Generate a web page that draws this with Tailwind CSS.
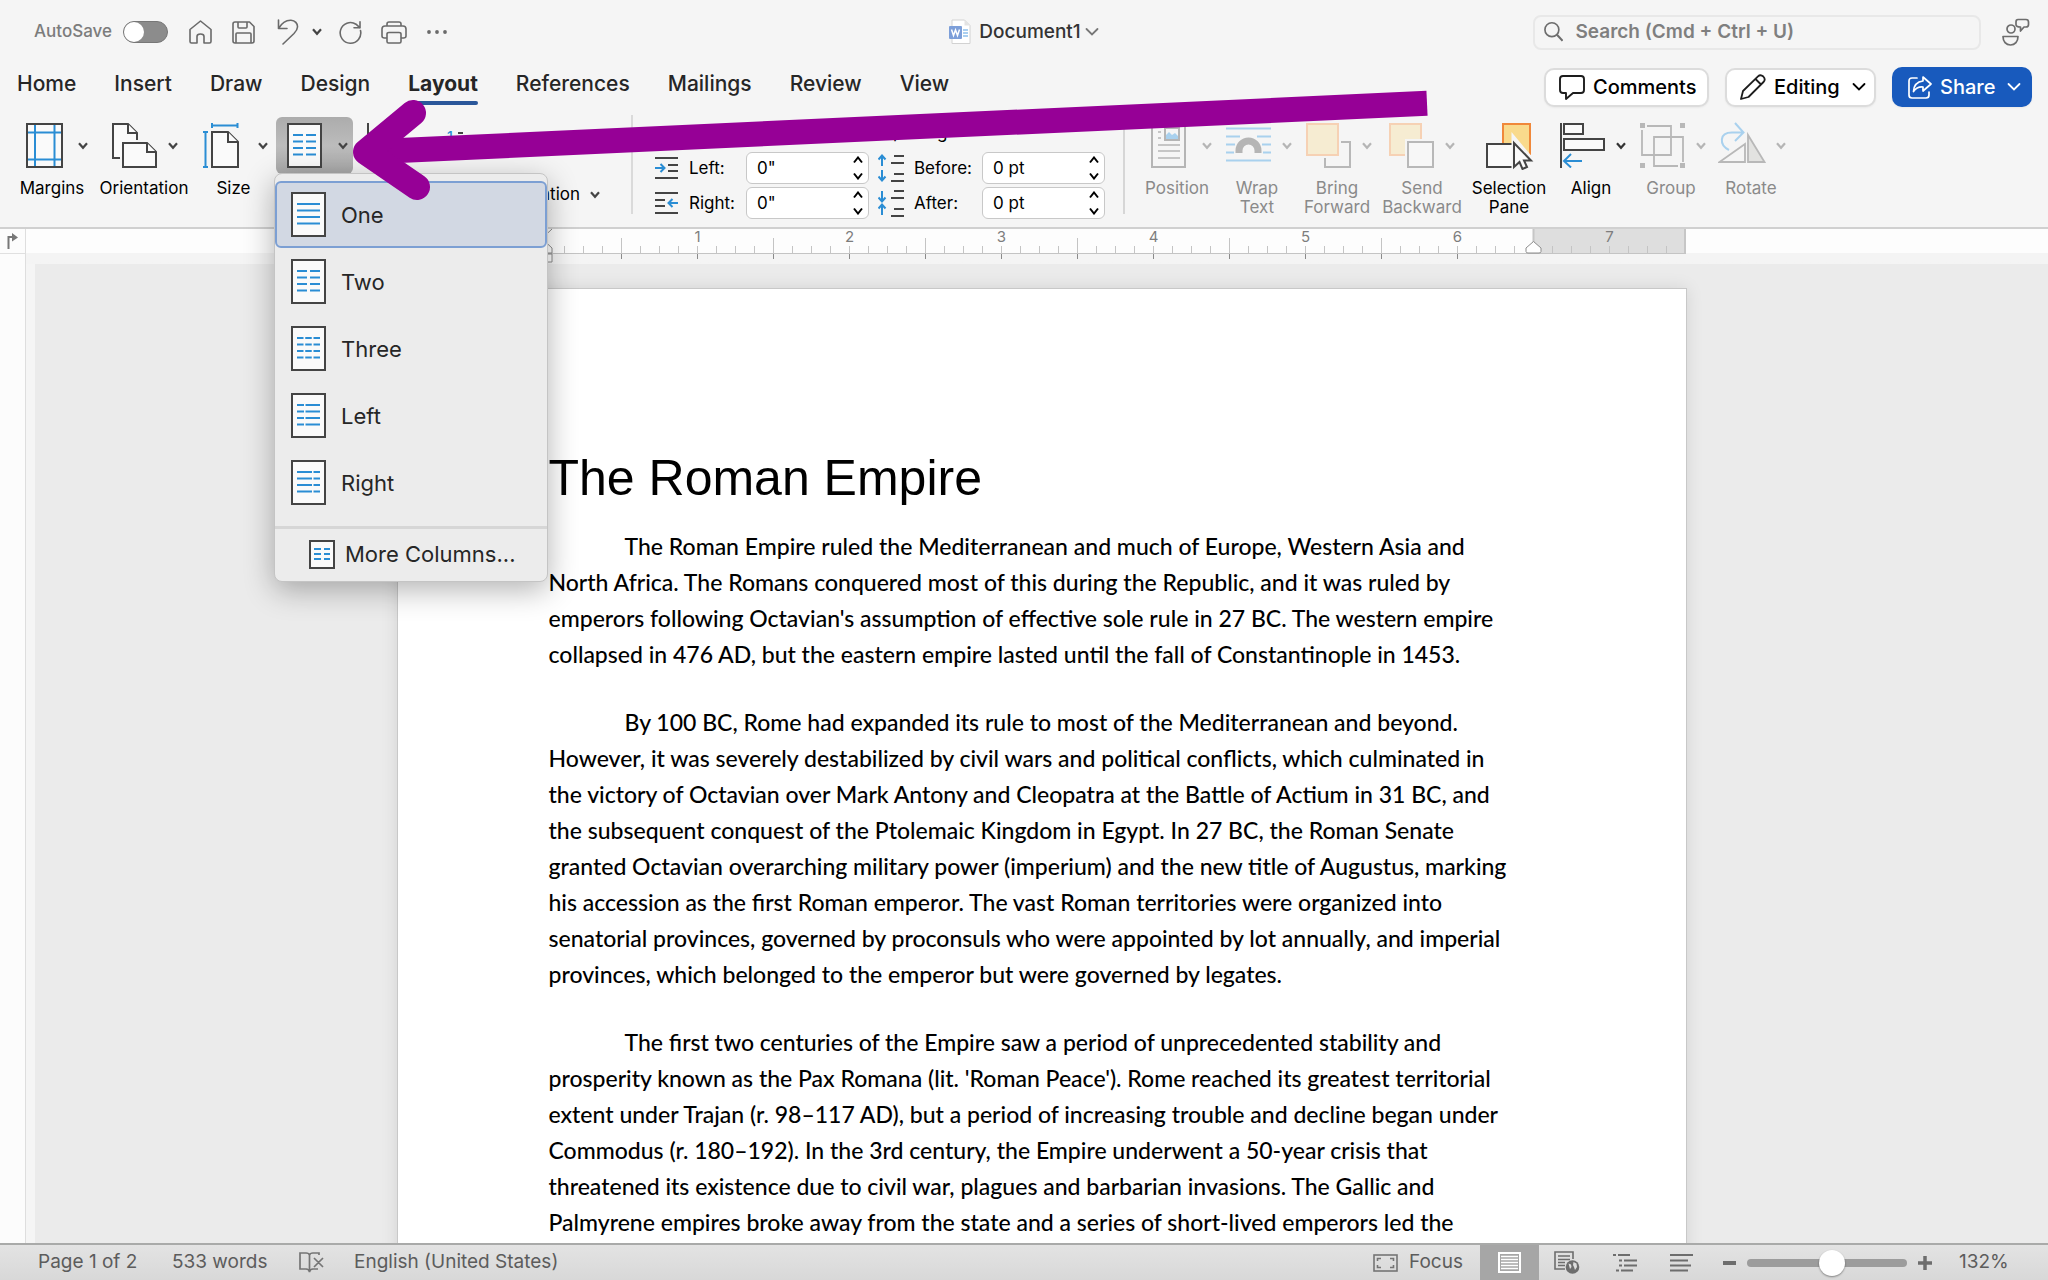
<!DOCTYPE html>
<html lang="en">
<head>
<meta charset="utf-8">
<meta name="viewport" content="width=device-width, initial-scale=1">
<title>Document1</title>
<script src="https://cdn.jsdelivr.net/npm/@tailwindcss/browser@4"></script>
</head>
<body class="relative flex h-screen flex-col overflow-hidden bg-[#f5f5f5] font-['Inter',sans-serif] text-[#262626]">

<!-- Shared symbols -->
<svg class="hidden">
  <symbol id="caret" viewBox="0 0 10 8"><path d="M1 1.2 5 5.8 9 1.2" fill="none" stroke="currentColor" stroke-width="2.2"/></symbol>
  <symbol id="chev" viewBox="0 0 14 10"><path d="M1.5 2 7 7.5 12.5 2" fill="none" stroke="currentColor" stroke-width="1.8" stroke-linecap="round"/></symbol>
  <symbol id="steps" viewBox="0 0 10 24"><path d="M1 6.500 5 1.500 9 6.500M1 17.500 5 22.500 9 17.500" fill="none" stroke="currentColor" stroke-width="2"/></symbol>
  <symbol id="sheet" viewBox="0 0 35 45"><rect x="1" y="1" width="33" height="43" fill="#fafafa" stroke="#444" stroke-width="2"/></symbol>
</svg>

<!-- Title bar -->
<header class="grid h-16 shrink-0 grid-cols-[1fr_auto_1fr] items-center">
  <div class="flex h-12 items-center pl-[34px] text-[#6a6a6a]">
    <span class="w-[89px] text-[17px] font-medium text-[#7c7c7c]">AutoSave</span>
    <button role="switch" aria-checked="false" aria-label="AutoSave" class="flex h-[22px] w-[45px] items-center rounded-full border border-[#777] bg-[#8c8c8c]"><span class="h-[20px] w-[20px] rounded-full bg-white"></span></button>
    <button aria-label="Home" class="ml-[21px]"><svg width="23" height="24" viewBox="0 0 23 24" fill="none" stroke="currentColor" stroke-width="1.6" stroke-linejoin="round"><path d="M1 9.500 11.500 1 22 9.500V21.500Q22 23 20.500 23H15V16.500Q15 14 11.500 14T8 16.500V23H2.500Q1 23 1 21.500Z"/></svg></button>
    <button aria-label="Save" class="ml-5"><svg width="23" height="23" viewBox="0 0 23 23" fill="none" stroke="currentColor" stroke-width="1.6" stroke-linejoin="round"><path d="M3 1H17.500L22 5.500V20Q22 22 20 22H3Q1 22 1 20V3Q1 1 3 1ZM6 1V6Q6 7 7 7H14Q15 7 15 6V1M4 22V13Q4 12 5 12H18Q19 12 19 13V22"/></svg></button>
    <button aria-label="Undo" class="ml-[22px]"><svg width="22" height="26" viewBox="0 0 22 26" fill="none" stroke="currentColor" stroke-width="1.6" stroke-linecap="round" stroke-linejoin="round"><path d="M1.500 1V9.500H10M1.500 9.500C5 3.500 9.500 1 14 1.200C18 1.500 20.700 4.500 20.500 8C20.400 10.500 19 12.500 17 14.500L6 25"/></svg></button>
    <button aria-label="Undo options" class="ml-[13px] text-[#444]"><svg width="10" height="8"><use href="#caret"/></svg></button>
    <button aria-label="Redo" class="ml-[17px]"><svg width="23" height="23" viewBox="0 0 23 23" fill="none" stroke="currentColor" stroke-width="1.600" stroke-linecap="round" stroke-linejoin="round"><path d="M21.500 9.500A10.300 10.300 0 1 1 17 3.200L21 6.800M21 .8V6.800H15"/></svg></button>
    <button aria-label="Print" class="ml-[19px]"><svg width="26" height="23" viewBox="0 0 26 23" fill="none" stroke="currentColor" stroke-width="1.600" stroke-linejoin="round"><path d="M6 5V3Q6 1 8 1H18Q20 1 20 3V5M6 17H3.500Q1 17 1 15V8Q1 5 4 5H22Q25 5 25 8V15Q25 17 22.500 17H20M8 11.500H18Q20 11.500 20 13V20.500Q20 22 18.500 22H7.500Q6 22 6 20.500V13Q6 11.500 8 11.500Z"/></svg></button>
    <button aria-label="More" class="ml-5"><svg width="20" height="4" viewBox="0 0 20 4" fill="currentColor"><circle cx="2" cy="2" r="1.900"/><circle cx="10" cy="2" r="1.900"/><circle cx="18" cy="2" r="1.900"/></svg></button>
  </div>
  <button class="flex items-center text-[19px] font-medium text-[#333]">
    <svg class="mr-2" width="22" height="26" viewBox="0 0 22 26"><path d="M3 1H15.500L21 6.500V24.500H3Z" fill="#fff" stroke="#d2d2d2"/><path d="M15.500 1V6.500H21Z" fill="#e3e3e3"/><path d="M14 11H19M14 14H19M14 17H19" stroke="#8fc0ec" stroke-width="1.300"/><rect y="7" width="13" height="13" rx="1" fill="#7d9fd9"/><path d="M2.500 10.500 4.500 16.500 6.500 11 8.500 16.500 10.500 10.500" stroke="#fff" stroke-width="1.500" fill="none"/></svg>
    Document1
    <svg class="ml-1 text-[#777]" width="14" height="10"><use href="#chev"/></svg>
  </button>
  <div class="flex items-center justify-end pr-[18px] text-[#6d6d6d]">
    <label class="flex h-[35px] w-[448px] items-center rounded-lg border-2 border-[#e8e8e8] pl-[9px]">
      <svg width="21" height="22" viewBox="0 0 21 22" fill="none" stroke="currentColor" stroke-width="1.800"><circle cx="8.500" cy="8.500" r="7.500"/><path d="M14 14 20 20.500" stroke-width="2.200"/></svg>
      <input aria-label="Search" placeholder="Search (Cmd + Ctrl + U)" class="ml-3 w-full bg-transparent text-[19px] font-semibold outline-none placeholder:text-[#7f7f7f]">
    </label>
    <button aria-label="Presence" class="ml-[21px]"><svg width="28" height="28" viewBox="0 0 28 28" fill="none" stroke="currentColor" stroke-width="1.700" stroke-linejoin="round"><circle cx="9" cy="11" r="4"/><path d="M1 18.500H16C16 23.500 13 27 8.500 27S1 23.500 1 18.500ZM16 1.500H24Q26.500 1.500 26.500 4V6.500Q26.500 9 24 9H22L18.500 13V9Q14 9 14 6.500V4Q14 1.500 16 1.500Z"/></svg></button>
  </div>
</header>

<!-- Ribbon tabs -->
<div class="flex h-[46px] shrink-0 justify-between pr-4">
  <nav class="flex h-[41px] items-stretch gap-[38px] pl-[17px] text-[21px] leading-[28px] font-medium whitespace-nowrap">
    <a href="#" class="pt-1.5">Home</a>
    <a href="#" class="pt-1.5">Insert</a>
    <a href="#" class="pt-1.5">Draw</a>
    <a href="#" class="pt-1.5">Design</a>
    <a href="#" class="relative pt-1.5 font-bold">Layout<span class="absolute inset-x-0 bottom-0 h-1 rounded-full bg-[#2a579a]"></span></a>
    <a href="#" class="pt-1.5">References</a>
    <a href="#" class="pt-1.5">Mailings</a>
    <a href="#" class="pt-1.5">Review</a>
    <a href="#" class="pt-1.5">View</a>
  </nav>
  <div class="flex h-[42px] items-center gap-4 pt-1 text-[20px] font-medium text-black">
    <button class="flex h-[39px] w-[165px] items-center rounded-[10px] border-2 border-[#dcdcdc] bg-white pl-[13px] shadow-xs">
      <svg class="mr-2" width="26" height="25" viewBox="0 0 26 25" fill="none" stroke="#1d1d1d" stroke-width="1.900" stroke-linejoin="round"><path d="M4 1H22Q25 1 25 4V15Q25 18 22 18H14L7 24V18H4Q1 18 1 15V4Q1 1 4 1Z"/></svg>Comments</button>
    <button class="flex h-[39px] w-[151px] items-center rounded-[10px] border-2 border-[#dcdcdc] bg-white pl-[13px] shadow-xs">
      <svg class="mr-2" width="26" height="26" viewBox="0 0 26 26" fill="none" stroke="#1d1d1d" stroke-width="1.800" stroke-linejoin="round"><path d="M1 25 3 17 18 2.300Q20.500 0 23.300 2.500 26 5.500 23.500 8L8.500 23ZM15.500 5 21 10.500"/></svg>Editing
      <svg class="ml-3" width="14" height="10"><use href="#chev"/></svg></button>
    <button class="flex h-[40px] w-[140px] items-center rounded-[10px] bg-[#185abd] pl-4 text-white shadow-xs">
      <svg class="mr-2" width="24" height="23" viewBox="0 0 24 23" fill="none" stroke="#fff" stroke-width="1.700" stroke-linejoin="round" stroke-linecap="round"><path d="M9 2H4Q1 2 1 5V19Q1 22 4 22H18Q21 22 21 19V16M15 1 23 8 15 15V11Q9 10.500 5.500 15.500 6 6 15 5Z"/></svg>Share
      <svg class="ml-3" width="14" height="10"><use href="#chev"/></svg></button>
  </div>
</div>

<!-- Ribbon -->
<section class="flex h-[119px] shrink-0 border-b-2 border-[#d0d0d0] pl-[13px] text-[17px] leading-[19px] text-black">
  <div class="flex gap-1.5 pt-[7px]">
    <button class="flex w-[78px] flex-col items-center">
      <span class="flex h-[57px] w-full items-center pl-[13px]"><svg width="37" height="45" viewBox="0 0 37 45"><rect x="1" y="1" width="35" height="43" fill="#fafafa" stroke="#444" stroke-width="2"/><path d="M9 2V43M28.500 2V43M2 9.500H35M2 36.500H35" stroke="#2a8dd4" stroke-width="2"/></svg><svg class="ml-[15px] text-[#444]" width="10" height="8"><use href="#caret"/></svg></span>
      <span class="mt-[5px]">Margins</span>
    </button>
    <button class="flex w-[94px] flex-col items-center">
      <span class="flex h-[57px] w-full items-center pl-[15px]"><svg width="45" height="45" viewBox="0 0 45 45" fill="#fafafa" stroke="#444" stroke-width="2"><path d="M8 35H1V1H16L25 10V17" /><path d="M16 1V10H25" /><path d="M11 20H35L44 29V44H11Z"/><path d="M35 20V29H44"/></svg><svg class="ml-[11px] text-[#444]" width="10" height="8"><use href="#caret"/></svg></span>
      <span class="mt-[5px]">Orientation</span>
    </button>
    <button class="flex w-[73px] flex-col items-center">
      <span class="flex h-[57px] w-full items-center pl-1.5"><svg width="36" height="45" viewBox="0 0 36 45" fill="#fafafa" stroke="#444" stroke-width="2"><path d="M9 9H25L35 19V44H9Z"/><path d="M25 9V19H35"/><path d="M9 2.500H34M9 0V5M34.500 0V5M2.500 9V44M0 9H5M0 44H5" stroke="#2a8dd4"/></svg><svg class="ml-[19px] text-[#444]" width="10" height="8"><use href="#caret"/></svg></span>
      <span class="mt-[5px]">Size</span>
    </button>
    <div class="relative">
      <button aria-label="Columns" aria-expanded="true" class="flex h-[57px] w-[77px] items-center rounded-md bg-linear-to-b from-[#acacac] via-[#bcbcbc] to-[#a8a8a8] pl-[11px]"><svg width="35" height="45" viewBox="0 0 35 45"><use href="#sheet"/><path d="M6 12H16M19 12H29M6 18.500H16M19 18.500H29M6 25H16M19 25H29M6 31.500H16M19 31.500H29" stroke="#2a8dd4" stroke-width="2"/></svg><svg class="ml-4 text-[#444]" width="10" height="8"><use href="#caret"/></svg></button>
      <!-- Columns menu -->
      <div role="menu" class="absolute top-[56px] -left-0.5 z-10 w-[274px] rounded-lg border border-[#c4c4c4] bg-[#ececec] pt-[7px] pb-0.5 text-[22px] leading-[28px] text-[#262626] shadow-[0_8px_30px_rgba(0,0,0,0.3)]">
        <button role="menuitem" class="flex h-[67px] w-full items-center rounded-md border-2 border-[#7c9fd3] bg-[#d2d8e3] pl-[14px]"><svg class="mr-[15px]" width="35" height="45" viewBox="0 0 35 45"><use href="#sheet"/><path d="M6 12H29M6 18.500H29M6 25H29M6 31.500H29" stroke="#2a8dd4" stroke-width="2"/></svg>One</button>
        <button role="menuitem" class="flex h-[67px] w-full items-center pl-4"><svg class="mr-[15px]" width="35" height="45" viewBox="0 0 35 45"><use href="#sheet"/><path d="M6 12H16M19 12H29M6 18.500H16M19 18.500H29M6 25H16M19 25H29M6 31.500H16M19 31.500H29" stroke="#2a8dd4" stroke-width="2"/></svg>Two</button>
        <button role="menuitem" class="flex h-[67px] w-full items-center pl-4"><svg class="mr-[15px]" width="35" height="45" viewBox="0 0 35 45"><use href="#sheet"/><path d="M6 12H29M6 18.500H29M6 25H29M6 31.500H29" stroke="#2a8dd4" stroke-width="2" stroke-dasharray="6.500 1.750"/></svg>Three</button>
        <button role="menuitem" class="flex h-[67px] w-full items-center pl-4"><svg class="mr-[15px]" width="35" height="45" viewBox="0 0 35 45"><use href="#sheet"/><path d="M6 12H13M14.500 12H29M6 18.500H13M14.500 18.500H29M6 25H13M14.500 25H29M6 31.500H13M14.500 31.500H29" stroke="#2a8dd4" stroke-width="2"/></svg>Left</button>
        <button role="menuitem" class="flex h-[67px] w-full items-center pl-4"><svg class="mr-[15px]" width="35" height="45" viewBox="0 0 35 45"><use href="#sheet"/><path d="M6 12H21M22.500 12H29M6 18.500H21M22.500 18.500H29M6 25H21M22.500 25H29M6 31.500H21M22.500 31.500H29" stroke="#2a8dd4" stroke-width="2"/></svg>Right</button>
        <button role="menuitem" class="mt-2.5 flex h-[53px] w-full items-center border-t-3 border-[#d6d6d6] pl-[34px]"><svg class="mr-2.5" width="26" height="29" viewBox="0 0 26 29"><rect x="1" y="1" width="24" height="27" fill="#fafafa" stroke="#444" stroke-width="2"/><path d="M5 9H12M15 9H21M5 14H12M15 14H21M5 19H12M15 19H21" stroke="#2a8dd4" stroke-width="2"/></svg>More Columns...</button>
      </div>
    </div>
  </div>

  <!-- Breaks, line numbers, hyphenation -->
  <div class="flex w-[278px] shrink-0 flex-col items-end pt-[13px] pr-[31px]">
    <div class="flex w-full items-start gap-10 pl-[14px]">
      <button aria-label="Breaks"><svg width="40" height="45" viewBox="0 0 40 45" fill="none" stroke="#444" stroke-width="2"><path d="M1 0V18H24V14M1 44V28H24V44"/></svg></button>
      <button aria-label="Line Numbers" class="flex items-start pt-1 text-[14px] font-medium text-[#2a8dd4]">1<svg class="mt-[5px] ml-1" width="12" height="20" viewBox="0 0 12 20" stroke="#444" stroke-width="2"><path d="M1 1H6M0 8H12M0 15H12"/></svg></button>
    </div>
    <button class="mt-[17px] flex items-center gap-2.5"><span>Hyphenation</span><svg class="text-[#444]" width="10" height="8"><use href="#caret"/></svg></button>
  </div>

  <!-- Paragraph -->
  <div class="mt-[5px] flex h-[99px] w-[492px] shrink-0 justify-between self-start border-l-2 border-[#dadada] pr-[18px] pl-[22px]">
    <fieldset class="w-[214px]">
      <legend class="h-[37px] pt-2 pl-14">Indent</legend>
      <div class="flex items-center pb-[3px]">
        <svg width="23" height="22" viewBox="0 0 23 22" fill="none" stroke="#444" stroke-width="2"><path d="M0 1H23M13 8H23M13 14H23M0 21H23"/><path d="M0 11H9M5.500 7 9.500 11 5.500 15" stroke="#2a8dd4"/></svg>
        <label for="il" class="pl-[11px]">Left:</label>
        <span class="relative ml-auto flex"><input id="il" value='0"' class="h-8 w-[123px] rounded-md border border-[#c8c8c8] bg-white pl-2.5"><svg class="absolute top-1 right-1.5" width="10" height="24"><use href="#steps"/></svg></span>
      </div>
      <div class="flex items-center">
        <svg width="23" height="22" viewBox="0 0 23 22" fill="none" stroke="#444" stroke-width="2"><path d="M0 1H23M0 8H10M0 14H10M0 21H23"/><path d="M14 11H23M17.500 7 13.500 11 17.500 15" stroke="#2a8dd4"/></svg>
        <label for="ir" class="pl-[11px]">Right:</label>
        <span class="relative ml-auto flex"><input id="ir" value='0"' class="h-8 w-[123px] rounded-md border border-[#c8c8c8] bg-white pl-2.5"><svg class="absolute top-1 right-1.5" width="10" height="24"><use href="#steps"/></svg></span>
      </div>
    </fieldset>
    <fieldset class="w-[227px]">
      <legend class="h-[37px] pt-2 pl-1">Spacing</legend>
      <div class="flex items-center pb-[3px]">
        <svg width="26" height="28" viewBox="0 0 26 28" fill="none" stroke="#444" stroke-width="2"><path d="M16 2H26M13 9H26M16 20H26M13 27H26" /><path d="M4 12V2M.5 5.500 4 1.500 7.500 5.500M4 16V26M.5 22.500 4 26.500 7.500 22.500" stroke="#2a8dd4"/></svg>
        <label for="sb" class="pl-[10px]">Before:</label>
        <span class="relative ml-auto flex"><input id="sb" value="0 pt" class="h-8 w-[123px] rounded-md border border-[#c8c8c8] bg-white pl-2.5"><svg class="absolute top-1 right-1.5" width="10" height="24"><use href="#steps"/></svg></span>
      </div>
      <div class="flex items-center">
        <svg width="26" height="28" viewBox="0 0 26 28" fill="none" stroke="#444" stroke-width="2"><path d="M16 2H26M13 9H26M16 20H26M13 27H26" /><path d="M4 2V12M.5 8.500 4 12.500 7.500 8.500M4 26V16M.5 19.500 4 15.500 7.500 19.500" stroke="#2a8dd4"/></svg>
        <label for="sa" class="pl-[10px]">After:</label>
        <span class="relative ml-auto flex"><input id="sa" value="0 pt" class="h-8 w-[123px] rounded-md border border-[#c8c8c8] bg-white pl-2.5"><svg class="absolute top-1 right-1.5" width="10" height="24"><use href="#steps"/></svg></span>
      </div>
    </fieldset>
  </div>

  <!-- Arrange -->
  <div class="mt-[5px] flex h-[99px] items-start gap-1 border-l-2 border-[#d6d6d6] pt-0.5 pl-[14px] text-[#8a8a8a]">
    <button class="flex w-[76px] flex-col items-center">
      <span class="flex h-[57px] w-full items-center pl-3"><svg width="35" height="45" viewBox="0 0 35 45" fill="none" stroke="#b5b5b5" stroke-width="2"><rect x="1" y="1" width="33" height="43"/><path d="M7 9H10M7 15H10M7 22H29M7 28H29M7 35H29" stroke-width="1.500"/><rect x="14" y="5" width="14" height="12"/><path d="M15 16V12L18 9 21 12 24 10 27 13V16Z" fill="#a9d1ee" stroke="none"/></svg><svg class="ml-4 text-[#b5b5b5]" width="10" height="8"><use href="#caret"/></svg></span>
      <span class="mt-[5px]">Position</span>
    </button>
    <button class="flex w-[76px] flex-col items-center">
      <span class="flex h-[57px] w-full items-center pl-[7px]"><svg width="45" height="45" viewBox="0 0 45 45" fill="none" stroke="#a9d1ee" stroke-width="2"><path d="M0 5.500H45M0 13.500H14M31 13.500H45M0 21.500H9M36 21.500H45M0 29.500H8M37 29.500H45M0 37.500H45"/><path d="M13 30V27.500A9.500 9.500 0 0 1 32 27.500V30" stroke="#b5b5b5" stroke-width="7"/></svg><svg class="ml-[11px] text-[#b5b5b5]" width="10" height="8"><use href="#caret"/></svg></span>
      <span class="mt-[5px]">Wrap<br>Text</span>
    </button>
    <button class="flex w-[76px] flex-col items-center">
      <span class="flex h-[57px] w-full items-center pl-[7px]"><svg width="45" height="45" viewBox="0 0 45 45" fill="none" stroke-width="2"><rect x="1" y="1" width="31" height="31" fill="#f6ecd2" stroke="#f6d1b4"/><path d="M35 19H44V44H19V35" stroke="#b8b8b8"/></svg><svg class="ml-[11px] text-[#b5b5b5]" width="10" height="8"><use href="#caret"/></svg></span>
      <span class="mt-[5px]">Bring<br>Forward</span>
    </button>
    <button class="flex w-[86px] flex-col items-center">
      <span class="flex h-[57px] w-full items-center pl-2.5"><svg width="45" height="45" viewBox="0 0 45 45" fill="none" stroke-width="2"><path d="M16 32H1V1H32V16H16Z" fill="#f6ecd2"/><path d="M16 32H1V1H32V16" stroke="#f6d1b4"/><rect x="19" y="19" width="25" height="25" fill="#f7f7f7" stroke="#b8b8b8"/></svg><svg class="ml-[11px] text-[#b5b5b5]" width="10" height="8"><use href="#caret"/></svg></span>
      <span class="mt-[5px]">Send<br>Backward</span>
    </button>
    <button class="flex w-20 flex-col items-center text-black">
      <span class="flex h-[57px] w-full items-center pl-[17px]"><svg width="48" height="48" viewBox="0 0 48 48" fill="none" stroke="#444" stroke-width="2"><rect x="17" y="2" width="27" height="30" fill="#f9da8c" stroke="#f0883a"/><rect x="1" y="22" width="27" height="23" fill="#fafafa"/><path d="M28 17V45L34 40 37 47 42 45 39 38.500H46Z" fill="#fafafa" stroke="#f5f5f5" stroke-width="5"/><path d="M28 21V45L33.500 40 36.500 47 41 45 38 38.500H45Z" fill="#fafafa"/></svg></span>
      <span class="mt-[5px]">Selection<br>Pane</span>
    </button>
    <button class="flex w-[76px] flex-col items-center text-black">
      <span class="flex h-[57px] w-full items-center pl-[7px]"><svg width="45" height="45" viewBox="0 0 45 45" fill="#fafafa" stroke="#444" stroke-width="2"><path d="M1 0V45"/><rect x="4" y="1" width="19" height="10"/><rect x="4" y="16" width="40" height="11"/><path d="M4 38H22M11 31 4 38 11 44.500" stroke="#2a8dd4" fill="none"/></svg><svg class="ml-[11px] text-[#333]" width="10" height="8"><use href="#caret"/></svg></span>
      <span class="mt-[5px]">Align</span>
    </button>
    <button class="flex w-[76px] flex-col items-center">
      <span class="flex h-[57px] w-full items-center pl-[7px]"><svg width="45" height="45" viewBox="0 0 45 45" fill="none" stroke="#b8b8b8" stroke-width="1.800"><path d="M7 3H31V32H2V7M38 43H14V14H43V39"/><path d="M0 0H5V5H0ZM40 0H45V5H40ZM0 40H5V45H0ZM40 40H45V45H40Z" fill="#b8b8b8" stroke="none"/></svg><svg class="ml-[11px] text-[#b5b5b5]" width="10" height="8"><use href="#caret"/></svg></span>
      <span class="mt-[5px]">Group</span>
    </button>
    <button class="flex w-[76px] flex-col items-center">
      <span class="flex h-[57px] w-full items-center pl-[5px]"><svg width="48" height="48" viewBox="0 0 48 48" fill="none" stroke="#b8b8b8" stroke-width="1.800"><path d="M27 22V40H1.500Z"/><path d="M30 13V40H46.500Z" fill="#e2e2e0"/><path d="M11 28C1 23 1 10.500 14 10.500H25M17 1 25.500 10.500 17 19" stroke="#a9d1ee" stroke-width="2"/></svg><svg class="ml-[10px] text-[#b5b5b5]" width="10" height="8"><use href="#caret"/></svg></span>
      <span class="mt-[5px]">Rotate</span>
    </button>
  </div>
</section>

<!-- Editor -->
<main class="flex min-h-0 flex-1">
  <div class="w-[26px] shrink-0 border-r border-[#dedede] bg-[#fcfcfc]">
    <button aria-label="Tab stop" class="flex h-[25px] w-full justify-center border-b border-[#e0e0e0] pt-1"><svg width="11" height="16" viewBox="0 0 11 16"><path d="M1.500 16V4H6" fill="none" stroke="#777" stroke-width="2"/><path d="M5 0 11 4.500 5 8.500Z" fill="#777"/></svg></button>
  </div>
  <div class="flex min-w-0 flex-1 flex-col">
    <div class="flex h-[35px] shrink-0 justify-center border-t-0 bg-linear-to-b from-[#fdfdfd] from-70% to-[#f4f4f4] to-70% pl-2.5">
      <svg id="ruler" width="1288" height="35" viewBox="0 0 1288 35" class="overflow-visible text-[15px]" fill="#7d7d7d" text-anchor="middle">
        <path d="M0 0H147V24H0ZM1135 0H1287V24H1135Z" fill="#dedede"/>
        <path d="M1135.500 0V24M1287 0V24" stroke="#c6c6c6" stroke-width="2"/>
      </svg>
    </div>
    <div class="ml-[9px] flex min-h-0 flex-1 justify-center overflow-hidden bg-[#ebebeb] pt-6">
      <article class="h-[1666px] w-[1290px] shrink-0 border border-[#c8c8c8] bg-white px-[151px] pt-[157px] text-black shadow-[0_0_16px_rgba(0,0,0,0.10)]">
        <h1 class="font-['Liberation_Sans',sans-serif] text-[50px] leading-[64px] whitespace-nowrap">The Roman Empire</h1>
        <div class="mt-[18px] space-y-8 font-['Lato',sans-serif] text-[23px] leading-[36px] font-medium whitespace-nowrap">
          <p class="indent-[76px]">The Roman Empire ruled the Mediterranean and much of Europe, Western Asia and<br>North Africa. The Romans conquered most of this during the Republic, and it was ruled by<br>emperors following Octavian's assumption of effective sole rule in 27 BC. The western empire<br>collapsed in 476 AD, but the eastern empire lasted until the fall of Constantinople in 1453.</p>
          <p class="indent-[76px]">By 100 BC, Rome had expanded its rule to most of the Mediterranean and beyond.<br>However, it was severely destabilized by civil wars and political conflicts, which culminated in<br>the victory of Octavian over Mark Antony and Cleopatra at the Battle of Actium in 31 BC, and<br>the subsequent conquest of the Ptolemaic Kingdom in Egypt. In 27 BC, the Roman Senate<br>granted Octavian overarching military power (imperium) and the new title of Augustus, marking<br>his accession as the first Roman emperor. The vast Roman territories were organized into<br>senatorial provinces, governed by proconsuls who were appointed by lot annually, and imperial<br>provinces, which belonged to the emperor but were governed by legates.</p>
          <p class="indent-[76px]">The first two centuries of the Empire saw a period of unprecedented stability and<br>prosperity known as the Pax Romana (lit. 'Roman Peace'). Rome reached its greatest territorial<br>extent under Trajan (r. 98–117 AD), but a period of increasing trouble and decline began under<br>Commodus (r. 180–192). In the 3rd century, the Empire underwent a 50-year crisis that<br>threatened its existence due to civil war, plagues and barbarian invasions. The Gallic and<br>Palmyrene empires broke away from the state and a series of short-lived emperors led the</p>
        </div>
      </article>
    </div>
  </div>
</main>

<!-- Status bar -->
<footer class="flex h-[37px] shrink-0 items-stretch justify-between border-t-2 border-[#a9aaa9] bg-linear-to-b from-[#e3e3e3] to-[#d8d8d8] text-[19px] text-[#5c5c5c]">
  <div class="flex items-center pl-[38px] whitespace-nowrap">
    <span class="w-[134px]">Page 1 of 2</span>
    <span class="w-[127px]">533 words</span>
    <button aria-label="Proofing" class="w-[55px]"><svg width="25" height="21" viewBox="0 0 25 21" fill="none" stroke="#757575" stroke-width="1.700"><path d="M10.500 18V3Q10 1 7 1H1V17H7Q10 17 10.500 20 11 17 14 17H19M10.500 3Q11 1 14 1H20V3M15 6 24 15M24 6 15 15"/></svg></button>
    <span>English (United States)</span>
  </div>
  <div class="flex items-center">
    <button class="flex items-center gap-[11px] pr-[17px]"><svg width="25" height="18" viewBox="0 0 25 18" fill="none" stroke="#757575" stroke-width="1.600"><rect x="1" y="1" width="23" height="16"/><path d="M4.500 7V4.500H8M17 4.500H20.500V7M20.500 11V13.500H17M8 13.500H4.500V11"/></svg>Focus</button>
    <button aria-label="Print layout" class="flex w-[59px] items-center justify-center self-stretch bg-[#a6a6a6]"><svg width="23" height="21" viewBox="0 0 23 21"><rect x="1" y="1" width="21" height="19" fill="#a6a6a6" stroke="#fff" stroke-width="2"/><path d="M3 4.500H20M3 7.500H20M3 10.500H20M3 13.500H20M3 16.500H20" stroke="#fff" stroke-width="1.400"/></svg></button>
    <button aria-label="Web layout" class="ml-[15px]"><svg width="26" height="24" viewBox="0 0 26 24" fill="none" stroke="#6d6d6d" stroke-width="1.600"><path d="M11 18H1V1H19V8M4 5H16M4 8.500H16M4 11.500H11M4 14.500H11"/><circle cx="18.500" cy="16" r="6.800" fill="#6d6d6d" stroke="none"/><path d="M14.500 12.500 17 13.500 17.500 16 16 18ZM19.500 11 22.500 12.500 23 16 21 19 20 16 19 14Z" fill="#ddd" stroke="none"/></svg></button>
    <button aria-label="Outline" class="ml-[33px]"><svg width="24" height="18" viewBox="0 0 24 18" stroke="#6d6d6d" stroke-width="2"><path d="M0 1H3M5 1H17M6 6.500H9M11 6.500H24M6 11.500H9M11 11.500H24M3 16.500H6M8 16.500H20"/></svg></button>
    <button aria-label="Draft" class="ml-[33px]"><svg width="23" height="18" viewBox="0 0 23 18" stroke="#6d6d6d" stroke-width="2"><path d="M0 1H23M0 6.500H18M0 11.500H21M0 16.500H18"/></svg></button>
    <button aria-label="Zoom out" class="ml-[30px] h-[4px] w-[13px] bg-[#6d6d6d]"></button>
    <input type="range" aria-label="Zoom" min="0" max="100" value="54" class="ml-[11px] h-2 w-40 appearance-none rounded-full bg-[#9c9c9c] [&::-webkit-slider-thumb]:h-[26px] [&::-webkit-slider-thumb]:w-[26px] [&::-webkit-slider-thumb]:appearance-none [&::-webkit-slider-thumb]:rounded-full [&::-webkit-slider-thumb]:bg-white [&::-webkit-slider-thumb]:shadow-[0_1px_2px_rgba(0,0,0,0.4)]">
    <button aria-label="Zoom in" class="ml-[11px]"><svg width="14" height="14" viewBox="0 0 14 14" stroke="#6d6d6d" stroke-width="3.500"><path d="M0 7H14M7 0V14"/></svg></button>
    <span class="w-[116px] pl-[27px]">132%</span>
  </div>
</footer>

<!-- Annotation arrow -->
<svg class="pointer-events-none absolute top-0 left-0 z-20" width="1440" height="220" viewBox="0 0 1440 220" fill="none" stroke="#960096">
  <path d="M366 152 1427 103.300" stroke-width="25"/>
  <path d="M413 113 366 152 417 187" stroke-width="26" stroke-linecap="round" stroke-linejoin="round"/>
</svg>

<script>
  // Ruler ticks every eighth of an inch, 152px per inch
  const ns = 'http://www.w3.org/2000/svg', ruler = document.getElementById('ruler');
  let light = 'M0 24.5H1288', dark = '';
  for (let i = 1; i < 60; i++) {
    const x = 147.5 + i * 19;
    if (i === 52) continue;
    const half = i % 8 === 4 && i < 52;
    light += `M${x} ${half ? 9 : 17}V24`;
    if (i < 52 && i % 4 === 0) dark += `M${x} 25V30`;
    if (i % 8 === 0) {
      const t = document.createElementNS(ns, 'text');
      t.setAttribute('x', x); t.setAttribute('y', 13); t.textContent = i / 8;
      ruler.append(t);
    }
  }
  for (const [d, c] of [[light, '#c4c4c4'], [dark, '#8a8a8a'], ['M1128 22.5V19L1135.500 12.500 1143 19V22.500Q1143 24 1141 24H1130Q1128 24 1128 22.500Z', '#8c8c8c'], ['M140 0 147 6.500 154 0M140 24V19L147 12.500 154 19V24ZM140 25H154V33H140Z', '#8c8c8c']]) {
    const p = document.createElementNS(ns, 'path');
    p.setAttribute('d', d); p.setAttribute('stroke', c); p.setAttribute('fill', '#fff');
    ruler.append(p);
  }
</script>
</body>
</html>
